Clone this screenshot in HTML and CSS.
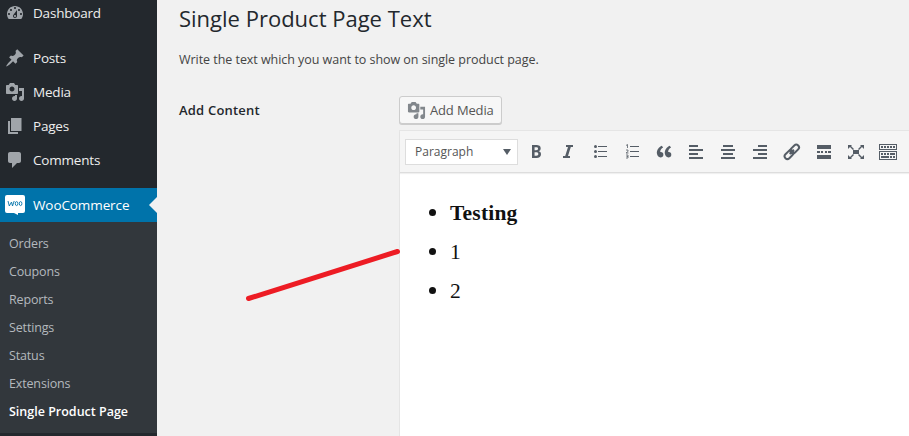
FILE: index.html
```html
<!DOCTYPE html>
<html lang="en">
<head>
<meta charset="utf-8">
<title>Single Product Page Text</title>
<link rel="stylesheet" href="styles.css">
</head>
<body>
<svg class="defs" width="0" height="0">
  <symbol id="media" viewBox="0 0 20 20"><path d="M13 11V4c0-.55-.45-1-1-1h-1.67L9 1H5L3.67 3H2c-.55 0-1 .45-1 1v7c0 .55.45 1 1 1h10c.55 0 1-.45 1-1zM7 4.5c1.38 0 2.5 1.12 2.5 2.5S8.38 9.5 7 9.5 4.5 8.38 4.5 7 5.62 4.5 7 4.5zM14 6h5v10.5c0 1.38-1.12 2.5-2.5 2.5S14 17.88 14 16.5s1.12-2.5 2.5-2.5c.17 0 .34.02.5.05V9h-3V6zm-4 8.05V13h2v3.5c0 1.38-1.12 2.5-2.5 2.5S7 17.88 7 16.5 8.12 14 9.5 14c.17 0 .34.02.5.05z"/></symbol>
</svg>
<div class="layout">
  <nav class="sidebar">
    <a class="item"><svg viewBox="0 0 20 20"><path d="M3.76 16h12.48c1.1-1.37 1.76-3.11 1.76-5 0-4.42-3.58-8-8-8s-8 3.58-8 8c0 1.89.66 3.63 1.76 5zM10 4c.55 0 1 .45 1 1s-.45 1-1 1-1-.45-1-1 .45-1 1-1zM6 6c.55 0 1 .45 1 1s-.45 1-1 1-1-.45-1-1 .45-1 1-1zm8 0c.55 0 1 .45 1 1s-.45 1-1 1-1-.45-1-1 .45-1 1-1zm-5.37 5.55L12 7v6c0 1.1-.9 2-2 2s-2-.9-2-2c0-.57.24-1.08.63-1.45zM4 10c.55 0 1 .45 1 1s-.45 1-1 1-1-.45-1-1 .45-1 1-1zm12 0c.55 0 1 .45 1 1s-.45 1-1 1-1-.45-1-1 .45-1 1-1zm-5 3c0-.55-.45-1-1-1s-1 .45-1 1 .45 1 1 1 1-.45 1-1z"/></svg><span>Dashboard</span></a>
    <div class="separator"></div>
    <a class="item"><svg viewBox="0 0 20 20"><path d="M10.44 3.02l1.82-1.82 6.36 6.35-1.83 1.82c-1.05-.68-2.48-.57-3.41.36l-.75.75c-.92.93-1.04 2.35-.35 3.41l-1.83 1.82-2.41-2.41-2.8 2.79c-.42.42-3.38 2.71-3.8 2.29s1.86-3.39 2.28-3.81l2.79-2.79L4.1 9.36l1.83-1.82c1.05.69 2.48.57 3.4-.36l.75-.75c.93-.92 1.05-2.35.36-3.41z"/></svg><span>Posts</span></a>
    <a class="item"><svg><use href="#media"/></svg><span>Media</span></a>
    <a class="item"><svg viewBox="0 0 20 20"><path d="M6 15V2h10.500v13H6zm-1 1h8v2H3V5h2v11z"/></svg><span>Pages</span></a>
    <a class="item"><svg viewBox="0 0 20 20"><path d="M5 2h9c1.100 0 2 .9 2 2v7c0 1.100-.9 2-2 2h-2l-5 5v-5H5c-1.100 0-2-.9-2-2V4c0-1.100.9-2 2-2z"/></svg><span>Comments</span></a>
    <div class="separator"></div>
    <a class="item current"><svg viewBox="0 0 20 20"><path class="bubble" d="M2 0h16q2 0 2 2v14q0 2-2 2h-5v2l-4-2H2q-2 0-2-2V2q0-2 2-2z"/><path class="woo" d="M3 6l1.300 5L6.500 7l1 4L9.200 6"/><ellipse class="woo" cx="11.600" cy="8.600" rx="1.300" ry="2"/><ellipse class="woo" cx="15.600" cy="8.600" rx="1.300" ry="2"/></svg><span>WooCommerce</span></a>
    <div class="submenu">
      <a>Orders</a><a>Coupons</a><a>Reports</a><a>Settings</a><a>Status</a><a>Extensions</a><a class="active">Single Product Page</a>
    </div>
  </nav>
  <main class="content">
    <h1>Single Product Page Text</h1>
    <p class="description">Write the text which you want to show on single product page.</p>
    <div class="field">
      <div class="label">Add Content</div>
      <div class="editor">
        <button class="add-media"><svg><use href="#media"/></svg><span>Add Media</span></button>
        <div class="frame">
          <div class="toolbar">
            <div class="select"><span>Paragraph</span><i></i></div>
            <svg class="tool" viewBox="0 0 20 20"><path d="M6 4v13h4.540c1.370 0 2.460-.33 3.260-1 .8-.66 1.200-1.580 1.200-2.770 0-.84-.17-1.510-.51-2.010s-.9-.85-1.670-1.030v-.09c.57-.1 1.020-.4 1.360-.9s.51-1.130.51-1.910c0-1.140-.39-1.980-1.170-2.500C12.750 4.260 11.500 4 9.780 4H6zm2.570 5.150V6.260h1.360c.73 0 1.270.11 1.610.32.34.22.51.58.51 1.070 0 .54-.16.92-.47 1.150s-.82.35-1.510.35h-1.500zm0 2.190h1.600c1.440 0 2.160.53 2.160 1.610 0 .6-.17 1.050-.51 1.340s-.86.43-1.570.43H8.570v-3.380z"/></svg>
            <svg class="tool" viewBox="0 0 20 20"><path d="M15 4v2h-2.200l-2.800 9h2v2H5v-2h2.200L10 6H8V4z"/></svg>
            <svg class="tool" viewBox="0 0 20 20"><path d="M8 5h9v1H8zM8 10h9v1H8zM8 15h9v1H8z"/><circle cx="5.500" cy="5.500" r="1.500"/><circle cx="5.500" cy="10.500" r="1.500"/><circle cx="5.500" cy="15.500" r="1.500"/></svg>
            <svg class="tool" viewBox="0 0 20 20"><path d="M8 5h9v1H8zM8 10h9v1H8zM8 15h9v1H8z"/><path class="thin" d="M4 4.500l1.500-1V7M4 9h2v1.500L4 12h2.500M4 14h2v3H4M4.500 15.500H6"/></svg>
            <svg class="tool" viewBox="0 0 20 20"><path d="M8.540 12.740c0-.87-.24-1.610-.72-2.220-.73-.92-2.140-1.030-2.960-.85-.34-1.930 1.300-4.390 3.420-5.450L6.650 1.940C3.450 3.460.31 6.960.85 11.370 1.190 14.160 2.800 16 5.080 16c1 0 1.830-.29 2.480-.88.66-.59.98-1.380.98-2.380zm9.430 0c0-.87-.24-1.610-.72-2.220-.73-.92-2.140-1.030-2.960-.85-.34-1.930 1.300-4.390 3.420-5.450l-1.630-2.280c-3.200 1.520-6.340 5.020-5.800 9.430.34 2.790 1.950 4.630 4.230 4.630 1 0 1.830-.29 2.480-.88.66-.59.98-1.380.98-2.380z" transform="translate(2.200 3) scale(.84)"/></svg>
            <svg class="tool" viewBox="0 0 20 20"><path d="M3 4h9v2H3zM3 8h14v2H3zM3 12h9v2H3zM3 16h14v2H3z"/></svg>
            <svg class="tool" viewBox="0 0 20 20"><path d="M5 4h10v2H5zM3 8h14v2H3zM5 12h10v2H5zM3 16h14v2H3z"/></svg>
            <svg class="tool" viewBox="0 0 20 20"><path d="M8 4h9v2H8zM3 8h14v2H3zM8 12h9v2H8zM3 16h14v2H3z"/></svg>
            <svg class="tool" viewBox="0 0 20 20"><g class="chain" transform="rotate(-45 10 11)"><rect x="1" y="8" width="10" height="5.500" rx="2.750"/><rect x="9" y="8" width="10" height="5.500" rx="2.750"/><path d="M7 10.750h6"/></g></svg>
            <svg class="tool" viewBox="0 0 20 20"><path d="M3 4h14v4H3zM3 10h3v2H3zM7 10h2v2H7zM11 10h2v2h-2zM14 10h3v2h-3zM3 14h14v4H3z"/></svg>
            <svg class="tool" viewBox="0 0 20 20"><path d="M7 9h6v4H7zM2 4h4L5 5l3 3-1 1-3-3-2 2zM18 4h-4l1 1-3 3 1 1 3-3 2 2zM2 18h4l-1-1 3-3-1-1-3 3-2-2zM18 18h-4l1-1-3-3 1-1 3 3 2-2z"/></svg>
            <svg class="tool" viewBox="0 0 20 20"><path fill-rule="evenodd" d="M1 3h18v6H1zM2 4v4h16V4zM1 10h18v9H1zM2 11v7h16v-7z"/><path d="M3 5h2v2H3zM6 5h2v2H6zM9 5h2v2H9zM12 5h2v2h-2zM15 5h2v2h-2zM3 12h2v2H3zM6 12h2v2H6zM9 12h2v2H9zM12 12h5v2h-5zM3 15h8v2H3zM12 15h2v2h-2zM15 15h2v2h-2z"/></svg>
          </div>
          <ul class="document"><li><b>Testing</b></li><li><span>1</span></li><li><span>2</span></li></ul>
        </div>
      </div>
    </div>
    <svg class="stroke" viewBox="0 0 160 60"><path d="M8.500 53.500L157.500 6.500"/></svg>
  </main>
</div>
</body>
</html>
```
FILE: styles.css
```css
* { box-sizing: border-box; }
body { margin: 0; background: #f1f1f1; color: #444; font: 13px/18px "Open Sans", "Noto Sans", sans-serif; overflow: hidden; }
.defs { display: block; height: 0; }
.layout { display: flex; width: 909px; height: 436px; overflow: hidden; }
.sidebar { flex: none; width: 157px; margin-top: -4px; background: #23282d; }
.item { display: flex; align-items: center; height: 34px; padding-left: 5px; gap: 8px; color: #eee; font-size: 13.5px; letter-spacing: -.2px; }
.item svg { width: 20px; height: 20px; fill: #a0a5aa; }
.separator { height: 11px; }
.current { position: relative; background: #0073aa; color: #fff; letter-spacing: -.1px; }
.current::after { content: ""; position: absolute; right: 0; top: 9px; border: 8px solid transparent; border-left: 0; border-right-color: #f1f1f1; }
.current svg .bubble { fill: #fff; }
.current svg .woo { fill: none; stroke: #0073aa; stroke-width: .9; }
.submenu { padding: 7px 0 8px; background: #32373c; }
.submenu a { display: block; height: 28px; padding: 1px 0 0 9px; color: #b4b9be; font-size: 12.5px; line-height: 28px; letter-spacing: -.15px; }
.submenu .active { color: #fff; font-weight: 600; letter-spacing: 0; }
.content { position: relative; flex: 1; padding-left: 22px; }
h1 { margin: 4px 0 0; color: #23282d; font-size: 22px; font-weight: 400; line-height: 29px; }
.description { margin: 18px 0 0; line-height: 18px; font-size: 12.5px; letter-spacing: -.045px; }
.field { display: flex; margin-top: 27px; }
.label { width: 220px; padding-top: 5px; color: #23282d; font-weight: 600; line-height: 18px; letter-spacing: .2px; }
.editor { flex: 1; }
.add-media { display: flex; align-items: center; width: 103px; height: 28px; padding: 0 0 0 7px; gap: 4px; border: 1px solid #ccc; border-radius: 3px; background: #f7f7f7; box-shadow: 0 1px 0 #ccc; color: #555; font: 13px "Open Sans", sans-serif; letter-spacing: -.15px; }
.add-media svg { width: 19px; height: 19px; fill: #82878c; }
.frame { height: 306px; margin-top: 6px; border: solid #e5e5e5; border-width: 1px 0 0 1px; background: #fff; }
.toolbar { display: flex; align-items: center; height: 42px; padding-left: 5px; border-bottom: 1px solid #ddd; background: #f5f5f5; box-shadow: 0 1px 1px rgba(0,0,0,.06); }
.select { display: flex; align-items: center; justify-content: space-between; width: 113px; height: 26px; margin-right: 8px; padding: 0 6px 0 9px; border: 1px solid #ddd; background: #fff; font-size: 12px; color: #555; }
.select i { border: 4px solid transparent; border-top: 6px solid #555d66; border-bottom: 0; }
.tool { flex: none; width: 20px; height: 20px; margin: -2px 12px 0 0; fill: #555d66; }
.thin { fill: none; stroke: #555d66; stroke-width: .8; }
.chain { fill: none; stroke: #555d66; stroke-width: 2; }
.document { margin: 0; padding: 20px 0 0 29px; list-style: none; color: #111; font: 21.5px/39px "Liberation Serif", serif; }
.document li { display: flex; align-items: center; gap: 14px; height: 39px; }
.document li::before { content: ""; width: 7px; height: 7px; border-radius: 50%; background: #111; }
.document b, .document span { padding-top: 2px; line-height: 37px; }
.document b { letter-spacing: .2px; }
.stroke { position: absolute; left: 83px; top: 245px; width: 160px; height: 60px; fill: none; stroke: #ed1c24; stroke-width: 5; stroke-linecap: round; }
```
